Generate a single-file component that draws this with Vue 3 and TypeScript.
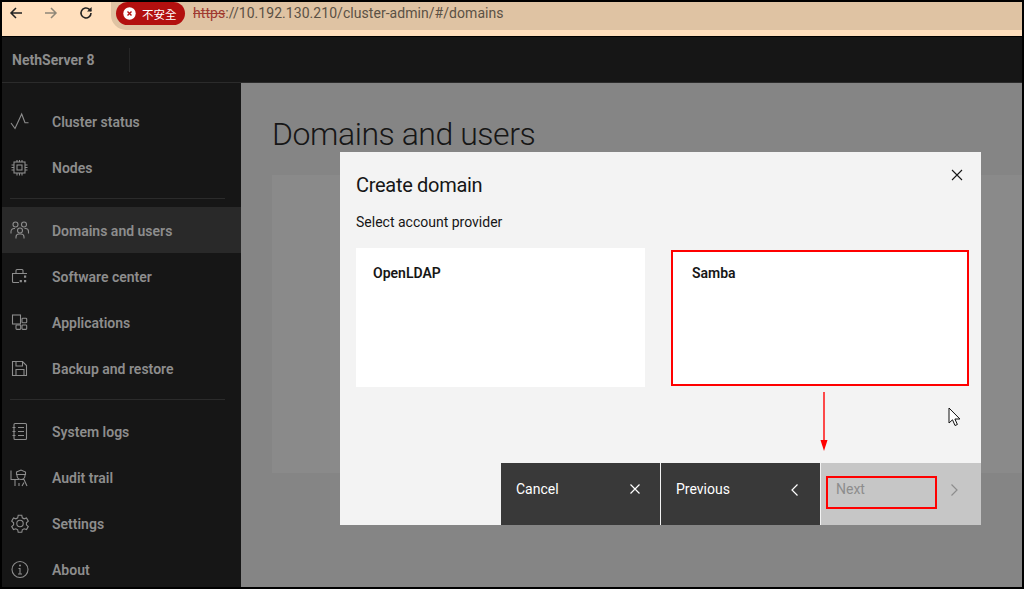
<script setup lang="ts">
interface NavItem { label: string; icon: string; active?: boolean }
const groupA: NavItem[] = [
  { label: 'Cluster status', icon: 'pulse' },
  { label: 'Nodes', icon: 'chip' },
]
const groupB: NavItem[] = [
  { label: 'Domains and users', icon: 'users', active: true },
  { label: 'Software center', icon: 'store' },
  { label: 'Applications', icon: 'apps' },
  { label: 'Backup and restore', icon: 'save' },
]
const groupC: NavItem[] = [
  { label: 'System logs', icon: 'log' },
  { label: 'Audit trail', icon: 'audit' },
  { label: 'Settings', icon: 'gear' },
  { label: 'About', icon: 'info' },
]
const groups = [groupA, groupB, groupC]
</script>

<template>
  <div class="screen">
    <div class="browser">
      <svg class="bicon" viewBox="0 0 16 16" width="16" height="16"><path d="M14 8H3M8 3L3 8l5 5" fill="none" stroke="#222" stroke-width="1.5"/></svg>
      <svg class="bicon fwd" viewBox="0 0 16 16" width="16" height="16"><path d="M2 8h11M8 3l5 5-5 5" fill="none" stroke="#8f8778" stroke-width="1.5"/></svg>
      <svg class="bicon rel" viewBox="0 0 16 16" width="16" height="16"><path d="M13 8a5 5 0 1 1-1.6-3.7L13 6" fill="none" stroke="#222" stroke-width="1.6"/><path d="M13.6 2v4.6H9z" fill="#222"/></svg>
      <div class="omni">
        <span class="chip">
          <svg viewBox="0 0 13 13" width="13" height="13"><circle cx="6.5" cy="6.5" r="6.2" fill="#fff"/><path d="M4.500 4.500l4 4M8.500 4.500l-4 4" stroke="#b3100f" stroke-width="1.4"/></svg>
          <span class="chip-text">不安全</span>
        </span>
        <span class="url"><span class="https">https</span>://10.192.130.210/cluster-admin/#/domains</span>
      </div>
    </div>
    <header class="top">
      <span class="brand">NethServer 8</span>
      <span class="top-sep"></span>
    </header>
    <div class="body">
      <nav class="side">
        <template v-for="(group, g) in groups" :key="g">
          <div v-if="g > 0" class="side-sep"></div>
          <a v-for="item in group" :key="item.label" class="nav" :class="{ active: item.active }">
            <svg class="nav-icon" viewBox="0 0 20 20" width="20" height="20" fill="none" stroke="#8d8d8d" stroke-width="1.1">
              <template v-if="item.icon === 'pulse'"><path d="M1 11l4 5.500L11.700 2 15 10.700h3.500" /></template>
              <template v-else-if="item.icon === 'chip'"><rect x="4" y="4" width="11" height="11"/><rect x="7" y="7" width="5" height="5"/><path d="M7 2v2M9.500 2v2M12 2v2M7 15v2.500M9.500 15v2.500M12 15v2.500M1.500 7H4M1.500 9.500H4M1.500 12H4M15 7h2.500M15 9.500h2.500M15 12h2.500"/></template>
              <template v-else-if="item.icon === 'users'"><circle cx="5.500" cy="3.500" r="2.500"/><circle cx="14" cy="3.500" r="2.500"/><circle cx="10" cy="9.500" r="2.500"/><path d="M1 12.500v-2a3 3 0 0 1 3-3h1M18.500 12.500v-2a3 3 0 0 0-3-3h-1M6 17.500V16a3 3 0 0 1 3-3h2a3 3 0 0 1 3 3v1.500"/></template>
              <template v-else-if="item.icon === 'store'"><path d="M6 6.500v-3a1 1 0 0 1 1-1h5a1 1 0 0 1 1 1v3M2 6.500h15M2.500 6.500v8a1 1 0 0 0 1 1H9"/><path d="M14 8.500h2.200v2.200H14zM9.700 13h2.200v2.200H9.700zM14 13h2.200v2.200H14z" fill="#8d8d8d" stroke="none"/></template>
              <template v-else-if="item.icon === 'apps'"><rect x="2.500" y="2" width="8" height="9"/><rect x="12" y="5.300" width="4.700" height="4.400" rx=".8"/><rect x="6" y="12" width="4.700" height="4.400" rx=".8"/><rect x="12" y="12" width="4.700" height="4.400" rx=".8"/></template>
              <template v-else-if="item.icon === 'save'"><path d="M2.500 2.500h10l4 4v10h-14z"/><path d="M6 2.500V7h6.500V2.500M6 16.500v-6h8v6"/></template>
              <template v-else-if="item.icon === 'log'"><rect x="4" y="1.500" width="12.500" height="16" rx="1"/><path d="M8 5.500h6M8 9.500h6M8 13.500h6M2.500 5.500h3M2.500 9.500h3M2.500 13.500h3"/></template>
              <template v-else-if="item.icon === 'audit'"><path d="M1 2.500v9h8M5 11.500V18M9 15v3"/><path d="M6.500 4L11 2l4.500 2v2.500h-9zM7 6.500v1a4 4 0 0 0 8 0v-1M10 11.500h4l3 6.500M14 14.500L12 18"/></template>
              <template v-else-if="item.icon === 'gear'"><circle cx="10" cy="9.500" r="3.200"/><path d="M8.200 1.300h3.600l.5 2.500 1.800 1 2.400-.8 1.800 3.100-1.900 1.700v2l1.900 1.700-1.800 3.100-2.400-.8-1.800 1-.5 2.500H8.200l-.5-2.500-1.800-1-2.400.8-1.800-3.100 1.900-1.700v-2L1.700 7.100l1.800-3.100 2.400.8 1.800-1z"/></template>
              <template v-else><circle cx="10" cy="9.500" r="8"/><path d="M8 14h4M10 14V8.500H8.500"/><circle cx="10" cy="5.500" r="1" fill="#8d8d8d" stroke="none"/></template>
            </svg>
            <span class="nav-label">{{ item.label }}</span>
          </a>
        </template>
      </nav>
      <main class="main">
        <h1 class="page-title">Domains and users</h1>
        <div class="page-card"></div>
      </main>
    </div>

    <section class="modal">
      <div class="modal-body">
        <h2 class="modal-title">Create domain</h2>
        <svg class="close" viewBox="0 0 12 12" width="12" height="12"><path d="M1 1l10 10M11 1L1 11" stroke="#161616" stroke-width="1.100"/></svg>
        <p class="modal-sub">Select account provider</p>
        <div class="tiles">
          <div class="tile">OpenLDAP</div>
          <div class="tile marked">Samba</div>
        </div>
      </div>
      <footer class="actions">
        <button class="act dark">Cancel
          <svg viewBox="0 0 12 12" width="12" height="12"><path d="M1.500 1.500l9 9M10.500 1.500l-9 9" stroke="#fff" stroke-width="1.200"/></svg>
        </button>
        <button class="act dark">Previous
          <svg viewBox="0 0 12 14" width="12" height="14"><path d="M8.500 1.500L3 7l5.500 5.500" fill="none" stroke="#fff" stroke-width="1.200"/></svg>
        </button>
        <button class="act off">Next
          <svg viewBox="0 0 12 14" width="12" height="14"><path d="M3.500 1.500L9 7l-5.500 5.500" fill="none" stroke="#8d8d8d" stroke-width="1.200"/></svg>
          <span class="next-mark"></span>
        </button>
      </footer>
    </section>

    <svg class="arrow" viewBox="0 0 10 60" width="10" height="60"><path d="M5 0v50" stroke="#f00" stroke-width="1.400"/><path d="M1.500 48h7L5 59z" fill="#f00"/></svg>
    <svg class="cursor" viewBox="0 0 14 20" width="14" height="20"><path d="M1 1v15l3.500-3.200 2.500 5.700 2.400-1-2.500-5.500h5z" fill="#fff" stroke="#111" stroke-width="1"/></svg>
  </div>
</template>

<style>
html, body { margin: 0; background: #000; overflow: hidden; }
</style>

<style scoped>
.screen {
  position: relative;
  width: 1024px;
  height: 589px;
  box-sizing: border-box;
  border: 2px solid #000;
  display: flex;
  flex-direction: column;
  overflow: hidden;
  font-family: Roboto, "Noto Sans CJK TC", sans-serif;
}
.browser {
  height: 34px;
  flex: none;
  background: #ffdfbd;
  border-bottom: 1px solid #000;
  display: flex;
  align-items: flex-start;
  padding-left: 6px;
}
.bicon { flex: none; margin-top: 3px; }
.fwd { margin-left: 19px; }
.rel { margin-left: 19px; }
.omni {
  margin-left: 17px;
  height: 28px;
  flex: 1;
  background: #dfc3a3;
  border-radius: 0 0 0 15px;
  display: flex;
  align-items: flex-start;
  padding-left: 5px;
  font-size: 14px;
}
.chip {
  height: 23px;
  width: 69px;
  background: #b3100f;
  border-radius: 12px;
  color: #fff;
  display: flex;
  align-items: center;
  gap: 6px;
  flex: none;
  box-sizing: border-box;
  padding-left: 7px;
}
.chip-text { font-size: 11.500px; font-family: "Noto Sans CJK TC", sans-serif; }
.url { margin-left: 8px; margin-top: 3px; color: #5b5145; font-size: 14px; line-height: 17px; letter-spacing: 0.050px; }
.https { color: #a03a30; text-decoration: line-through; }
.top {
  height: 45px;
  flex: none;
  background: #161616;
  border-bottom: 1px solid #2b2b2b;
  display: flex;
  align-items: center;
  padding-left: 10px;
}
.brand { color: #8d8d8d; font-size: 14px; font-weight: 700; width: 117px; }
.top-sep { width: 1px; height: 24px; background: #262626; }
.body { flex: 1; display: flex; min-height: 0; }
.side {
  width: 239px;
  flex: none;
  background: #161616;
  padding-top: 15px;
  box-sizing: border-box;
}
.side-sep { height: 1px; background: #2b2b2b; margin: 8px 16px 8px 8px; }
.nav {
  height: 46px;
  box-sizing: border-box;
  padding: 2px 0 0 8px;
  display: flex;
  align-items: center;
  color: #8d8d8d;
  font-size: 14px;
  font-weight: 600;
}
.nav.active { background: #292929; }
.nav-icon { flex: none; }
.nav-label { margin-left: 22px; }
.main { flex: 1; background: #858585; padding: 35px 0 0 31px; min-width: 0; }
.page-title {
  margin: 0;
  font-size: 32px;
  font-weight: 300;
  line-height: 32px;
  color: #161616;
  letter-spacing: -0.450px;
}
.page-card { margin-top: 25px; height: 298px; background: #8a8a8a; }
.modal {
  position: absolute;
  left: 338px;
  top: 150px;
  width: 641px;
  height: 373px;
  background: #f3f3f3;
  display: flex;
  flex-direction: column;
}
.modal-body { flex: 1; padding: 22px 12px 0 16px; position: relative; }
.modal-title { margin: 0; font-size: 20px; font-weight: 400; line-height: 22px; color: #161616; letter-spacing: -0.300px; }
.close { position: absolute; top: 17px; right: 18px; }
.modal-sub { margin: 17px 0 0; font-size: 14px; line-height: 18px; color: #161616; }
.tiles { display: grid; grid-template-columns: 289px 298px; column-gap: 26px; margin-top: 17px; align-items: center; }
.tile {
  height: 139px;
  box-sizing: border-box;
  background: #fff;
  padding: 17px;
  font-size: 14px;
  font-weight: 600;
  color: #161616;
}
.tile.marked { height: 136px; border: 2px solid #f00; padding: 13px 19px; }
.actions { height: 62px; flex: none; display: flex; justify-content: flex-end; gap: 1px; }
.act {
  position: relative;
  width: 159px;
  border: 0;
  padding: 16px 19px 0 15px;
  display: flex;
  align-items: flex-start;
  justify-content: space-between;
  font: 400 14px/20px Roboto, sans-serif;
}
.act svg { margin-top: 4px; }
.act.dark { background: #393939; color: #fff; }
.act.off { background: #c6c6c6; color: #8d8d8d; width: 160px; padding-right: 21px; }
.next-mark {
  position: absolute;
  left: 5px;
  top: 13px;
  width: 107px;
  height: 29px;
  border: 2px solid #f00;
}
.arrow { position: absolute; left: 817px; top: 390px; }
.cursor { position: absolute; left: 946px; top: 405px; }
</style>
